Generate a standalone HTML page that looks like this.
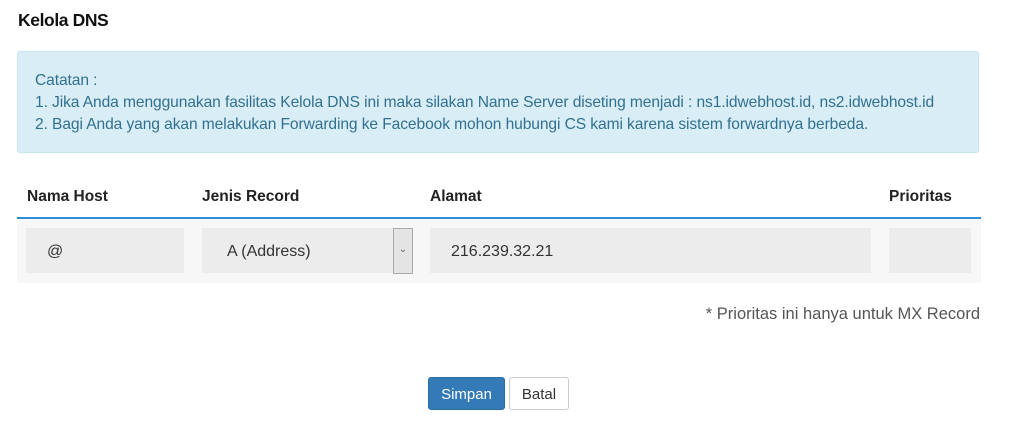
<!DOCTYPE html>
<html><head><style>
body{margin:0;width:1024px;height:443px;background:#fff;font-family:"Liberation Sans",sans-serif;position:relative;overflow:hidden}
.a{position:absolute}
h1{position:absolute;left:18px;top:10px;margin:0;font-size:17.5px;font-weight:bold;color:#111;letter-spacing:-0.4px}
.al{left:17px;top:51px;width:962px;height:102px;background:#d9edf7;border:1px solid #c6e6f2;border-radius:3px;color:#31708f;font-size:15.6px;line-height:22px;box-sizing:border-box;padding:18px 0 0 17px;letter-spacing:-0.1px}
.th{top:188px;font-size:15.5px;font-weight:bold;color:#222}
.line{left:17px;top:217px;width:964px;height:2px;background:#2b8ed6}
.row{left:17px;top:219px;width:964px;height:64px;background:#f7f7f7}
.in{top:228px;height:45px;background:#ececec;font-size:16px;color:#333;line-height:48px}
.btn{top:377px;height:33px;border-radius:3px;font-size:15px;line-height:33px;text-align:center;box-sizing:border-box}
</style></head><body>
<h1>Kelola DNS</h1>
<div class="a al">Catatan :<br>1. Jika Anda menggunakan fasilitas Kelola DNS ini maka silakan Name Server diseting menjadi : ns1.idwebhost.id, ns2.idwebhost.id<br>2. Bagi Anda yang akan melakukan Forwarding ke Facebook mohon hubungi CS kami karena sistem forwardnya berbeda.</div>
<div class="a th" style="left:27px">Nama Host</div>
<div class="a th" style="left:202px">Jenis Record</div>
<div class="a th" style="left:430px">Alamat</div>
<div class="a th" style="left:889px">Prioritas</div>
<div class="a line"></div>
<div class="a row"></div>
<div class="a in" style="left:26px;width:158px;padding-left:21px;box-sizing:border-box">@</div>
<div class="a in" style="left:202px;width:210px;padding-left:25px;box-sizing:border-box">A (Address)</div>
<div class="a" style="left:393px;top:228px;width:18px;height:44px;background:#e4e4e4;border:1px solid #aaa;font-size:10px;color:#666;text-align:center;line-height:42px">&#8964;</div>
<div class="a in" style="left:430px;width:441px;padding-left:21px;box-sizing:border-box">216.239.32.21</div>
<div class="a in" style="left:889px;width:82px"></div>
<div class="a" style="right:44px;top:305px;font-size:16.5px;color:#555">* Prioritas ini hanya untuk MX Record</div>
<div class="a btn" style="left:428px;width:77px;background:#337ab7;color:#fff;border:1px solid #2e6da4">Simpan</div>
<div class="a btn" style="left:509px;width:60px;background:#fff;color:#333;border:1px solid #ccc">Batal</div>
</body></html>
